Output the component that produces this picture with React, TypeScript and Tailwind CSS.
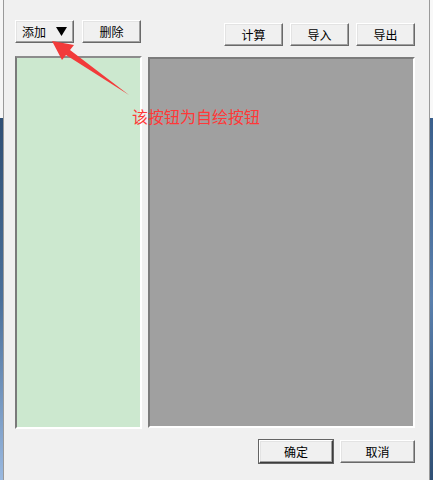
import React from "react";

const font = { fontFamily: '"Noto Sans CJK SC", "Noto Sans", sans-serif' };

function Btn({ label, w, def, children }: { label?: string; w: string; def?: boolean; children?: React.ReactNode }) {
  return (
    <div
      className={`${w} h-[23px] flex items-center justify-center text-[12px] leading-none text-black bg-[#f0f0f0] border border-t-white border-l-white ${
        def ? "border-r-[#3c3c3c] border-b-[#3c3c3c] outline outline-1 outline-[#646464]" : "border-r-[#696969] border-b-[#696969]"
      } shadow-[inset_-1px_-1px_0_#a0a0a0,inset_1px_1px_0_#e3e3e3]`}
    >
      {label}
      {children}
    </div>
  );
}

export default function App() {
  return (
    <div className="relative w-[433px] h-[480px] bg-[#f0f0f0] flex overflow-hidden" style={font}>
      {/* left edge artifact */}
      <div className="w-[3px] flex flex-col">
        <div className="h-[118px] bg-[#f6f6f6]" />
        <div className="flex-1 bg-gradient-to-b from-[#2f4f74] via-[#4a6f9a] to-[#9ab9e0]" />
      </div>
      <div className="w-[1px] bg-[#9a9a9a]" />

      {/* main */}
      <div className="flex-1 flex flex-col pl-[11px] pr-[14px] pt-[20px]">
        <div className="flex items-start h-[26px]">
          <div className="flex gap-[8px]">
            <Btn w="w-[59px]">
              <div className="flex items-center w-full pl-[6px] pr-[6px] justify-between">
                <span>添加</span>
                <svg width="11" height="9" viewBox="0 0 11 9">
                  <polygon points="0,0 11,0 5.5,9" fill="#000" />
                </svg>
              </div>
            </Btn>
            <Btn w="w-[59px]" label="删除" />
          </div>
          <div className="flex-1" />
          <div className="flex gap-[7px] mt-[3px]">
            <Btn w="w-[59px]" label="计算" />
            <Btn w="w-[59px]" label="导入" />
            <Btn w="w-[59px]" label="导出" />
          </div>
        </div>

        <div className="flex gap-[6px] mt-[10px]">
          <div className="w-[127px] h-[373px] bg-[#cce8cf] border-2 border-t-[#8c8c8c] border-l-[#7a7a7a] border-r-white border-b-white" />
          <div className="flex-1 mt-[1px] h-[371px] bg-[#a0a0a0] border-2 border-t-[#7c7c7c] border-l-[#7c7c7c] border-r-white border-b-white" />
        </div>

        <div className="flex justify-end gap-[7px] mt-[11px]">
          <Btn w="w-[74px]" def label="确定" />
          <Btn w="w-[75px]" label="取消" />
        </div>
      </div>

      {/* right edge artifact */}
      <div className="w-[1px] bg-[#9a9a9a]" />
      <div className="w-[3px] flex flex-col">
        <div className="h-[118px] bg-[#f8f8f8]" />
        <div className="flex-1 bg-gradient-to-b from-[#3a5f8c] via-[#5a80ad] to-[#2f4f74]" />
      </div>

      {/* annotation */}
      <svg className="absolute left-0 top-0 pointer-events-none" width="433" height="480">
        <polygon points="52,41 74,45 70,50 129,95 66,55 62,60" fill="#f23a3a" />
      </svg>
      <div className="absolute left-[132px] top-[107px] text-[16px] leading-[18px] text-[#ff3838] whitespace-nowrap">
        该按钮为自绘按钮
      </div>
    </div>
  );
}
